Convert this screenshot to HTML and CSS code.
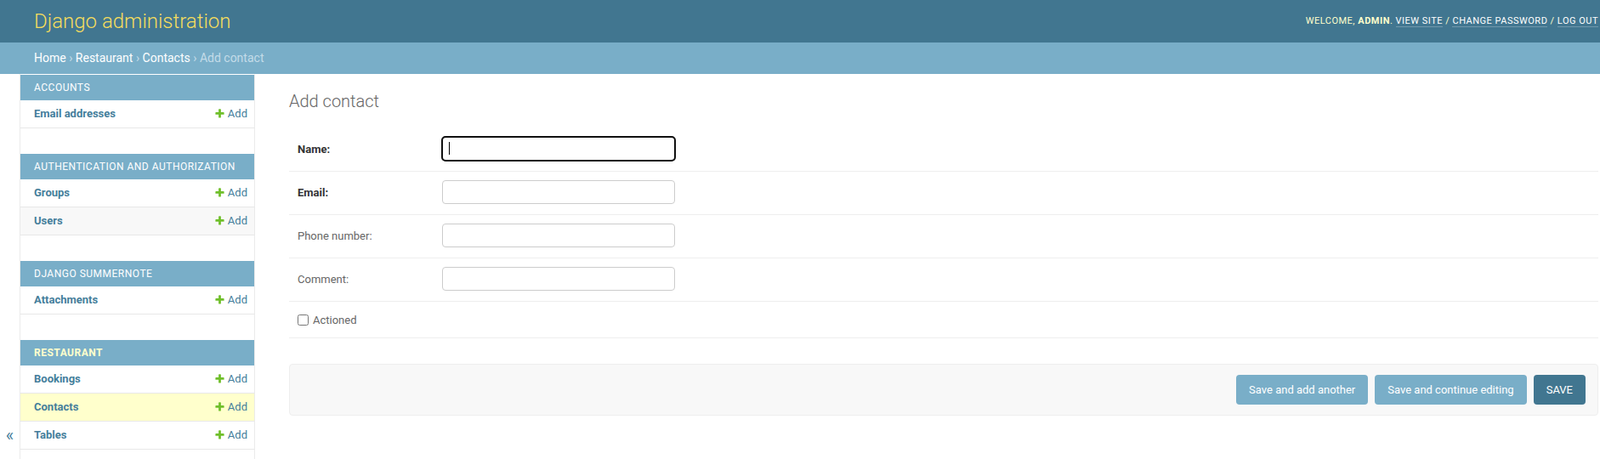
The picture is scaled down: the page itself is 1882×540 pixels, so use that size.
FILE: index.html
```html
<!DOCTYPE html>
<html lang="en">
<head>
<meta charset="utf-8">
<title>Add contact | Django site admin</title>
<link rel="stylesheet" href="styles.css">
</head>
<body>
<div class="page">
  <header class="header">
    <h1 class="site-name"><a href="#">Django administration</a></h1>
    <div class="user-tools">
      Welcome, <strong>admin</strong>.
      <a href="#">View site</a> /
      <a href="#">Change password</a> /
      <a href="#">Log out</a>
    </div>
  </header>
  <nav class="breadcrumbs">
    <a href="#">Home</a> &rsaquo; <a href="#">Restaurant</a> &rsaquo; <a href="#">Contacts</a> &rsaquo; Add contact
  </nav>
  <div class="main">
    <button class="toggle-nav" type="button">&laquo;</button>
    <nav class="sidebar">
      <table class="app">
        <caption><a href="#" class="section">Accounts</a></caption>
        <tr><th><a href="#">Email addresses</a></th><td><a href="#" class="addlink"><svg class="plus" viewBox="0 0 1792 1792"><path d="M1600 796v192q0 40-28 68t-68 28h-416v416q0 40-28 68t-68 28h-192q-40 0-68-28t-28-68v-416h-416q-40 0-68-28t-28-68v-192q0-40 28-68t68-28h416v-416q0-40 28-68t68-28h192q40 0 68 28t28 68v416h416q40 0 68 28t28 68z"/></svg>Add</a></td></tr>
      </table>
      <table class="app">
        <caption><a href="#" class="section">Authentication and Authorization</a></caption>
        <tr><th><a href="#">Groups</a></th><td><a href="#" class="addlink"><svg class="plus" viewBox="0 0 1792 1792"><path d="M1600 796v192q0 40-28 68t-68 28h-416v416q0 40-28 68t-68 28h-192q-40 0-68-28t-28-68v-416h-416q-40 0-68-28t-28-68v-192q0-40 28-68t68-28h416v-416q0-40 28-68t68-28h192q40 0 68 28t28 68v416h416q40 0 68 28t28 68z"/></svg>Add</a></td></tr>
        <tr class="even"><th><a href="#">Users</a></th><td><a href="#" class="addlink"><svg class="plus" viewBox="0 0 1792 1792"><path d="M1600 796v192q0 40-28 68t-68 28h-416v416q0 40-28 68t-68 28h-192q-40 0-68-28t-28-68v-416h-416q-40 0-68-28t-28-68v-192q0-40 28-68t68-28h416v-416q0-40 28-68t68-28h192q40 0 68 28t28 68v416h416q40 0 68 28t28 68z"/></svg>Add</a></td></tr>
      </table>
      <table class="app">
        <caption><a href="#" class="section">Django Summernote</a></caption>
        <tr><th><a href="#">Attachments</a></th><td><a href="#" class="addlink"><svg class="plus" viewBox="0 0 1792 1792"><path d="M1600 796v192q0 40-28 68t-68 28h-416v416q0 40-28 68t-68 28h-192q-40 0-68-28t-28-68v-416h-416q-40 0-68-28t-28-68v-192q0-40 28-68t68-28h416v-416q0-40 28-68t68-28h192q40 0 68 28t28 68v416h416q40 0 68 28t28 68z"/></svg>Add</a></td></tr>
      </table>
      <table class="app current-app">
        <caption><a href="#" class="section">Restaurant</a></caption>
        <tr><th><a href="#">Bookings</a></th><td><a href="#" class="addlink"><svg class="plus" viewBox="0 0 1792 1792"><path d="M1600 796v192q0 40-28 68t-68 28h-416v416q0 40-28 68t-68 28h-192q-40 0-68-28t-28-68v-416h-416q-40 0-68-28t-28-68v-192q0-40 28-68t68-28h416v-416q0-40 28-68t68-28h192q40 0 68 28t28 68v416h416q40 0 68 28t28 68z"/></svg>Add</a></td></tr>
        <tr class="current-model"><th><a href="#">Contacts</a></th><td><a href="#" class="addlink"><svg class="plus" viewBox="0 0 1792 1792"><path d="M1600 796v192q0 40-28 68t-68 28h-416v416q0 40-28 68t-68 28h-192q-40 0-68-28t-28-68v-416h-416q-40 0-68-28t-28-68v-192q0-40 28-68t68-28h416v-416q0-40 28-68t68-28h192q40 0 68 28t28 68v416h416q40 0 68 28t28 68z"/></svg>Add</a></td></tr>
        <tr><th><a href="#">Tables</a></th><td><a href="#" class="addlink"><svg class="plus" viewBox="0 0 1792 1792"><path d="M1600 796v192q0 40-28 68t-68 28h-416v416q0 40-28 68t-68 28h-192q-40 0-68-28t-28-68v-416h-416q-40 0-68-28t-28-68v-192q0-40 28-68t68-28h416v-416q0-40 28-68t68-28h192q40 0 68 28t28 68v416h416q40 0 68 28t28 68z"/></svg>Add</a></td></tr>
      </table>
    </nav>
    <div class="content">
      <h1 class="title">Add contact</h1>
      <form>
        <fieldset class="fieldset">
          <div class="form-row">
            <label class="field-label required" for="id_name">Name:</label>
            <span class="input-wrap"><input class="text-input focused" type="text" id="id_name"><span class="caret"></span></span>
          </div>
          <div class="form-row">
            <label class="field-label required" for="id_email">Email:</label>
            <input class="text-input" type="text" id="id_email">
          </div>
          <div class="form-row">
            <label class="field-label" for="id_phone">Phone number:</label>
            <input class="text-input" type="text" id="id_phone">
          </div>
          <div class="form-row">
            <label class="field-label" for="id_comment">Comment:</label>
            <input class="text-input" type="text" id="id_comment">
          </div>
          <div class="form-row">
            <div class="checkbox-row">
              <input class="checkbox" type="checkbox" id="id_actioned">
              <label class="checkbox-label" for="id_actioned">Actioned</label>
            </div>
          </div>
        </fieldset>
        <div class="submit-row">
          <button type="button" class="btn">Save and add another</button>
          <button type="button" class="btn">Save and continue editing</button>
          <button type="button" class="btn btn-default">Save</button>
        </div>
      </form>
    </div>
  </div>
</div>
</body>
</html>
```

FILE: styles.css
```css
html, body {
  margin: 0;
  padding: 0;
  overflow: hidden;
}
body {
  font-family: Roboto, "Liberation Sans", Arial, sans-serif;
  font-size: 14px;
  color: #333;
  background: #fff;
}
a { text-decoration: none; }

.page {
  width: 1920px;
}

/* header */
.header {
  display: flex;
  justify-content: space-between;
  align-items: center;
  padding: 10px 40px;
  background: #417690;
  color: #ffc;
}
.site-name {
  margin: 0;
  font-size: 24px;
  font-weight: 300;
  line-height: 30px;
}
.site-name a { color: #f5dd5d; }
.user-tools {
  font-size: 11px;
  letter-spacing: 0.5px;
  text-transform: uppercase;
  color: #ffc;
  line-height: 14px;
}
.user-tools strong { font-weight: 700; }
.user-tools a {
  color: #fff;
  border-bottom: 1px solid rgba(255,255,255,0.25);
}

/* breadcrumbs */
.breadcrumbs {
  background: #79aec8;
  padding: 10px 40px;
  color: #c4dce8;
  font-size: 14px;
  line-height: 17px;
}
.breadcrumbs a { color: #fff; }

/* main */
.main {
  display: flex;
  align-items: flex-start;
}
.toggle-nav {
  flex: 0 0 23px;
  width: 23px;
  height: 850px;
  border: 0;
  border-right: 1px solid #eaeaea;
  background: #fff;
  color: #447e9b;
  font-size: 20px;
  font-family: Roboto, "Liberation Sans", sans-serif;
  padding: 0;
  display: flex;
  align-items: center;
  justify-content: center;
  box-sizing: content-box;
}
.sidebar {
  flex: 0 0 275px;
  border-top: 1px solid transparent;
  border-right: 1px solid #eaeaea;
  height: 850px;
}
.app {
  width: 100%;
  border-collapse: collapse;
  margin-bottom: 30px;
}
.app caption {
  text-align: left;
  padding: 8px 8px 8px 16px;
  font-size: 12px;
  line-height: 14px;
  letter-spacing: 0.5px;
  text-transform: uppercase;
  white-space: nowrap;
  background: #79aec8;
}
.app caption a { color: #fff; font-weight: 400; }
.current-app caption a { color: #ffc; font-weight: 700; }
.app th, .app td {
  font-size: 13px;
  line-height: 16px;
  height: 16px;
  padding: 8px;
  border-bottom: 1px solid #e8e8e8;
  vertical-align: top;
}
.app th {
  width: 100%;
  text-align: left;
  padding-left: 16px;
  font-weight: 700;
}
.app th a { color: #447e9b; }
.app td { white-space: nowrap; text-align: right; }
.app tr.even { background: #f8f8f8; }
.app tr.current-model { background: #ffc; }
.addlink {
  color: #447e9b;
}
.plus {
  display: inline-block;
  width: 13px;
  height: 13px;
  fill: #70bf2b;
  margin-right: 3px;
  vertical-align: -2px;
}

/* content */
.content {
  flex: 1;
  padding: 20px 40px;
}
.title {
  margin: 0 0 20px;
  font-size: 20px;
  font-weight: 300;
  color: #666;
  line-height: 24px;
}
.fieldset {
  border: none;
  margin: 0 0 30px;
  padding: 0;
}
.form-row {
  display: flex;
  align-items: baseline;
  padding: 10px;
  border-bottom: 1px solid #eee;
  font-size: 13px;
}
.field-label {
  width: 160px;
  padding: 0 10px 0 0;
  line-height: 1;
  color: #666;
  font-size: 13px;
  flex: none;
}
.field-label.required {
  font-weight: 700;
  color: #333;
}
.input-wrap {
  position: relative;
  display: inline-block;
}
.text-input {
  display: block;
  box-sizing: border-box;
  width: 274px;
  height: 28px;
  margin: 0 0 2px;
  padding: 5px 6px;
  border: 1px solid #ccc;
  border-radius: 4px;
  font-family: Roboto, "Liberation Sans", sans-serif;
  font-size: 13px;
  color: #333;
  background: #fff;
}
.text-input.focused {
  outline: 2px solid #101010;
  outline-offset: -1px;
}
.caret {
  position: absolute;
  left: 8px;
  top: 6px;
  width: 1px;
  height: 15px;
  background: #000;
}
.checkbox-row {
  display: flex;
  align-items: center;
  height: 22px;
}
.checkbox {
  width: 13px;
  height: 13px;
  margin: 0;
}
.checkbox-label {
  padding-left: 5px;
  color: #666;
  font-size: 13px;
}

/* submit row */
.submit-row {
  display: flex;
  justify-content: flex-end;
  gap: 8px;
  padding: 12px 14px;
  margin: 0 0 20px;
  background: #f8f8f8;
  border: 1px solid #eee;
  border-radius: 4px;
}
.btn {
  height: 35px;
  line-height: 15px;
  padding: 10px 15px;
  border: none;
  border-radius: 4px;
  background: #79aec8;
  color: #fff;
  font-family: Roboto, "Liberation Sans", sans-serif;
  font-size: 13px;
  font-weight: 400;
}
.btn-default {
  background: #417690;
  text-transform: uppercase;
}
```
